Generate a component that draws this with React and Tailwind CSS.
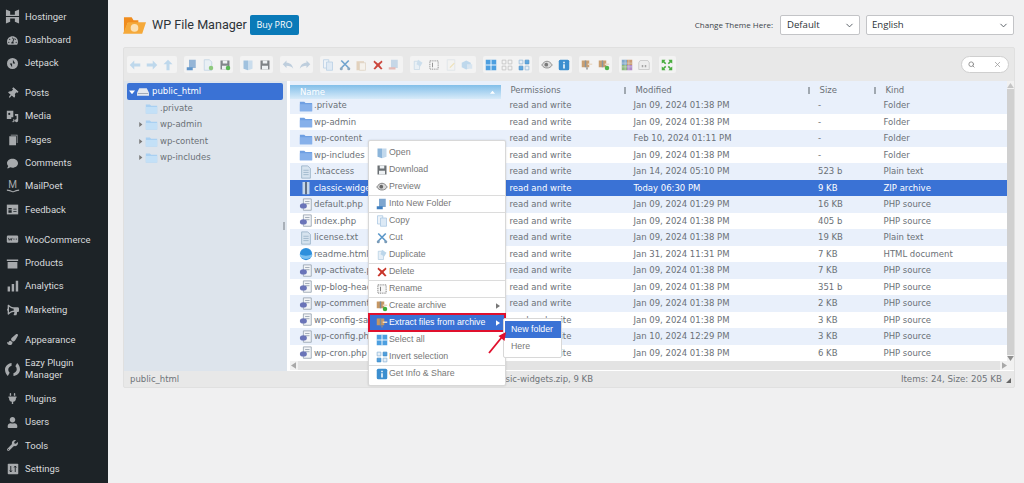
import { ChevronDown, Search, X } from "lucide-react";
import { FaThumbtack, FaComment, FaWrench, FaUser, FaPlug, FaBullhorn, FaTachometerAlt, FaPaintBrush } from "react-icons/fa";

const Svg = ({ children, size = 12, className = "" }) => (
  <svg viewBox="0 0 16 16" width={size} height={size} className={className}>
    {children}
  </svg>
);

// ---- sidebar icons
const side = {
  hostinger: (
    <svg viewBox="0 0 16 16" width="15" height="15" fill="#a7aaad">
      <path d="M1 .5l4.500 2V6h5V2.500L15 .5v7H1zM1 8.500h14v7l-4.500-2V10h-5v3.500L1 15.500z" />
    </svg>
  ),
  dash: <FaTachometerAlt size={11} color="#a7aaad" />,
  jetpack: (
    <svg viewBox="0 0 16 16" width="11" height="11">
      <circle cx="8" cy="8" r="8" fill="#a7aaad" />
      <path d="M8.600 2.500v5.600h3.400zM7.400 13.500V7.900H4z" fill="#1d2327" />
    </svg>
  ),
  posts: <FaThumbtack size={11} color="#a7aaad" style={{ transform: "rotate(40deg)" }} />,
  media: (
    <svg viewBox="0 0 16 16" width="13" height="13" fill="#a7aaad">
      <path d="M1 1h8v8H6.500v2H1zM4 3.500a1.300 1.300 0 100 2.600 1.300 1.300 0 000-2.600z" fillRule="evenodd" />
      <path d="M11 5h4v8a2 2 0 11-2-2V7h-2zM9 11a2 2 0 11-2 3h2z" />
    </svg>
  ),
  pages: (
    <svg viewBox="0 0 16 16" width="12" height="12" fill="#a7aaad">
      <path d="M5 1h9v11h-1V2H5zM3 3h9v12H3z" />
    </svg>
  ),
  comments: <FaComment size={11} color="#a7aaad" />,
  mailpoet: (
    <span className="flex flex-col items-center text-[10px] leading-[9px] text-[#a7aaad]">
      M
      <svg viewBox="0 0 16 4" width="14" height="4">
        <path d="M1 1c3 0 5 1 7 2 2-1 4-2 7-2" stroke="#a7aaad" fill="none" strokeWidth="1.200" />
      </svg>
    </span>
  ),
  feedback: (
    <svg viewBox="0 0 16 16" width="13" height="13">
      <path d="M1 2h14v12H1z" fill="#a7aaad" />
      <path d="M3 6h4v2H3zM3 9h4v3H3zM9 7h4v1H9zM9 10h4v1H9z" fill="#1d2327" />
    </svg>
  ),
  woo: (
    <svg viewBox="0 0 16 16" width="13" height="13">
      <rect x="1" y="3" width="14" height="9" rx="1.500" fill="#a7aaad" />
      <path d="M3 6l1 3 1.500-2 1 2 1-3M9 7.500h1.500M12 7.500h1.500" stroke="#1d2327" fill="none" strokeWidth="1" />
    </svg>
  ),
  products: (
    <svg viewBox="0 0 16 16" width="13" height="13" fill="#a7aaad">
      <path d="M1 3h14v2H1zM2 6h12v8H2z" />
    </svg>
  ),
  analytics: (
    <svg viewBox="0 0 16 16" width="13" height="13" fill="#a7aaad">
      <path d="M2 8h3v6H2zM7 5h3v9H7zM12 1h3v13h-3z" />
    </svg>
  ),
  marketing: <FaBullhorn size={12} color="#a7aaad" style={{ transform: "scaleX(-1)" }} />,
  appearance: <FaPaintBrush size={11} color="#a7aaad" />,
  eazy: (
    <svg viewBox="0 0 16 16" width="15" height="15" fill="#a7aaad">
      <path d="M7 1v3C4.500 5 3.500 6.500 3.500 8S4 10.500 5 11.500L3 15C1 13 0 10.500 0 8c0-3.500 3-6.500 7-7z" />
      <path d="M9 15v-3c2.500-1 3.500-2.500 3.500-4s-.5-3-1.500-3.500L13 1c2 2 3 4.500 3 7 0 3.500-3 6.500-7 7z" />
    </svg>
  ),
  plugins: <FaPlug size={11} color="#a7aaad" />,
  users: <FaUser size={11} color="#a7aaad" />,
  tools: <FaWrench size={11} color="#a7aaad" />,
  settings: (
    <svg viewBox="0 0 16 16" width="12" height="12">
      <rect x="1" y="1" width="14" height="14" rx="1" fill="#a7aaad" />
      <path d="M5 4v8M3.500 10L5 12l1.500-2M11 12V4M9.500 6L11 4l1.500 2" stroke="#1d2327" fill="none" strokeWidth="1.200" />
    </svg>
  ),
};

const menu = [
  { label: "Hostinger", icon: "hostinger" },
  { label: "Dashboard", icon: "dash" },
  { label: "Jetpack", icon: "jetpack" },
  { label: "Posts", icon: "posts", gap: true },
  { label: "Media", icon: "media" },
  { label: "Pages", icon: "pages" },
  { label: "Comments", icon: "comments" },
  { label: "MailPoet", icon: "mailpoet" },
  { label: "Feedback", icon: "feedback" },
  { label: "WooCommerce", icon: "woo", gap: true },
  { label: "Products", icon: "products" },
  { label: "Analytics", icon: "analytics" },
  { label: "Marketing", icon: "marketing" },
  { label: "Appearance", icon: "appearance", gap: true },
  { label: "Eazy Plugin Manager", icon: "eazy", tall: true },
  { label: "Plugins", icon: "plugins" },
  { label: "Users", icon: "users" },
  { label: "Tools", icon: "tools" },
  { label: "Settings", icon: "settings" },
];

// ---- file manager icons
const I = {
  back: <Svg><path d="M1 8l6-6v4h8v4H7v4z" fill="#a9cdea" /></Svg>,
  forward: <Svg><path d="M15 8L9 2v4H1v4h8v4z" fill="#a9cdea" /></Svg>,
  up: <Svg><path d="M8 1l6 6h-4v8H6V7H2z" fill="#a9cdea" /></Svg>,
  drive: <Svg><path d="M4 1h9v11H4z" fill="#7ea6cf" /><path d="M1 11h8v4H1z" fill="#3f7fc0" /></Svg>,
  newfile: <Svg><path d="M3 1h7l3 3v11H3z" fill="#e6eff7" stroke="#a9c4dc" /><circle cx="12" cy="12" r="3" fill="#63b84c" /></Svg>,
  savegreen: <Svg><path d="M2 2h12v12H2z" fill="#6d7378" /><path d="M5 2h6v4H5zM4 9h8v5H4z" fill="#eef1f3" /><circle cx="12" cy="12" r="3" fill="#3fae3a" /></Svg>,
  open: <Svg><path d="M2 2h6v13l-6-2z" fill="#8cb5da" /><path d="M8 2h6v11l-6 2z" fill="#c1d8ec" /></Svg>,
  floppy: <Svg><path d="M2 2h12v12H2z" fill="#6a6f73" /><path d="M5 2h6v4H5zM4 9h8v5H4z" fill="#eef1f3" /></Svg>,
  undo: <Svg><path d="M1 7l5-5v3c5 0 8 3 9 8-2-3-5-4-9-4v3z" fill="#a9bfd4" /></Svg>,
  redo: <Svg><path d="M15 7l-5-5v3C5 5 2 8 1 13c2-3 5-4 9-4v3z" fill="#a9bfd4" /></Svg>,
  copy: <Svg><path d="M2 1h7v11H2z" fill="#eef4fa" stroke="#a8c6e2" /><path d="M6 4h8v11H6z" fill="#dce9f5" stroke="#a8c6e2" /></Svg>,
  cut: <Svg><path d="M3 2l10 10M13 2L3 12" stroke="#5b97c8" strokeWidth="2.200" /><circle cx="3" cy="13" r="2" fill="#7a9bb8" /><circle cx="13" cy="13" r="2" fill="#7a9bb8" /></Svg>,
  paste: <Svg><path d="M2 3h10v12H2z" fill="#dcc4a6" /><path d="M6 5h8v10H6z" fill="#f7f2ea" stroke="#d6c7b1" /></Svg>,
  del: <Svg><path d="M3 2l5 4 5-4 1 2-4 4 4 5-2 1-4-4-4 4-2-1 4-5-4-4z" fill="#c8352a" /></Svg>,
  rm: <Svg><path d="M4 1h9v11H4z" fill="#b4cce2" /><path d="M1 11h9v3H1z" fill="#e0a39c" /></Svg>,
  dup: <Svg><path d="M3 3h7v11H3z" fill="#e6eff7" stroke="#b4cde2" /><path d="M8 1l6 4-3 5-5-3z" fill="#bcd6ea" /></Svg>,
  rename: <Svg><path d="M2.500 2.500h11v11h-11z" fill="#f7f7f7" stroke="#555" strokeDasharray="1.400 1" /><path d="M6 5v6" stroke="#555" /></Svg>,
  edit: <Svg><path d="M3 1h10v14H3z" fill="#f3f3f0" stroke="#cfd8e0" /><path d="M6 11l6-6 1 1-6 6z" fill="#ecd58e" /></Svg>,
  resize: <Svg><path d="M1 5l6-3 6 3v6l-6 3-6-3z" fill="#a9cdea" /><path d="M8 7h7v6H8z" fill="#cde0f0" /></Svg>,
  selAll: <Svg><path d="M1 1h14v14H1z" fill="#4d9fe0" /><path d="M8 1v14M1 8h14" stroke="#fff" strokeWidth="1.200" /></Svg>,
  selNone: <Svg><path d="M1.500 1.500h5v5h-5zM9.500 1.500h5v5h-5zM1.500 9.500h5v5h-5zM9.500 9.500h5v5h-5z" fill="#f5f5f5" stroke="#b9b9b9" /></Svg>,
  selInv: <Svg><path d="M1.500 9.500h5v5h-5zM9.500 1.500h5v5h-5z" fill="#4d9fe0" stroke="#3f89c4" /><path d="M1.500 1.500h5v5h-5zM9.500 9.500h5v5h-5z" fill="#e8f0f7" stroke="#8db6d8" /></Svg>,
  eye: <Svg><path d="M1 8c2-3 4-5 7-5s5 2 7 5c-2 3-4 4-7 4S3 11 1 8z" fill="#d8d8d8" stroke="#666" /><circle cx="7" cy="7.500" r="2.500" fill="#666" /></Svg>,
  info: <Svg><rect x="1" y="1" width="14" height="14" rx="2" fill="#3b8ecf" /><path d="M7 3.500h2v2H7zM7 7h2v5.500H7z" fill="#fff" /></Svg>,
  arch: <Svg><path d="M1 2h10v9H1z" fill="#c69763" /><path d="M5 2h2v9H5z" fill="#7c8b96" /><path d="M9 6h6v2H9z" fill="#e8d9c6" /><path d="M7 11h2v3H7z" fill="#888" /></Svg>,
  archG: <Svg><path d="M1 2h10v9H1z" fill="#c69763" /><path d="M5 2h2v9H5z" fill="#7c8b96" /><path d="M9 6h6v2H9z" fill="#e8d9c6" /><circle cx="12" cy="12" r="3" fill="#3fae3a" /></Svg>,
  places: <Svg><path d="M1 1h7v7H1z" fill="#6d9bc4" /><path d="M8 1h7v7H8z" fill="#c48c5c" /><path d="M1 8h7v7H1z" fill="#7bae6a" /><path d="M8 8h7v7H8z" fill="#a57ac0" /><path d="M1 5.500h14M1 10.500h14M5.500 1v14M10.500 1v14" stroke="#dfe8ee" strokeWidth=".6" /></Svg>,
  about: <Svg><path d="M3 2h10l2 3v9H1V5z" fill="#ececec" stroke="#bbb" /><path d="M5 8h2v3H5zM9 8h2v3H9z" fill="#999" /></Svg>,
  full: <Svg><path d="M1 1h5L4.500 3 7 5.500 5.500 7 3 4.500 1 6zM15 1v5l-2-1.500L10.500 7 9 5.500 11.500 3 10 1zM1 15v-5l2 1.500L5.500 9 7 10.500 4.500 13 6 15zM15 15h-5l1.500-2L9 10.500 10.500 9l2.500 2.500 2-1.500z" fill="#49ad3f" /></Svg>,
  folder: <Svg size={14}><path d="M1 3h5l1.500 1.500H15V14H1z" fill="#6f9fe2" /><path d="M1 6h14v8H1z" fill="#86b0ea" /></Svg>,
  treeFolder: <Svg size={13}><path d="M1 3h5l1.500 1.500H15V14H1z" fill="#a9d0f2" /><path d="M1 6h14v8H1z" fill="#c3e0f7" /></Svg>,
  text: <Svg size={14}><path d="M3 1h7l3 3v11H3z" fill="#d6e3ef" stroke="#9db5c9" /><path d="M5 6h6M5 8.500h6M5 11h6" stroke="#9db5c9" /></Svg>,
  php: <Svg size={14}><path d="M5 1h9v13H5z" fill="#f2f4f6" stroke="#9aa6b2" /><path d="M7 4h5M7 6.500h5" stroke="#9aa6b2" /><ellipse cx="5" cy="9" rx="4" ry="3" fill="#6a74b8" /></Svg>,
  zip: <Svg size={14}><path d="M4 1h8v14H4z" fill="#c3d6ea" /><path d="M7 1h2v14H7z" fill="#4f6176" /></Svg>,
  html: <Svg size={14}><circle cx="8" cy="8" r="7" fill="#2d8fdc" /><path d="M1 8c3 2.500 11 2.500 14 0v2c-2 5-12 5-14 0z" fill="#7bc0f0" /></Svg>,
};

const toolbar = [
  [["back", 0.7], ["forward", 0.7], ["up", 0.7]],
  [["drive", 0.8], ["newfile", 0.7], ["savegreen", 0.85]],
  [["open", 0.8], ["floppy", 0.85]],
  [["undo", 0.7], ["redo", 0.7]],
  [["copy", 0.8], ["cut", 0.85], ["paste", 0.7], ["del", 0.9], ["rm", 0.7]],
  [["dup", 0.7], ["rename", 0.8], ["edit", 0.6], ["resize", 0.7]],
  [["selAll", 1], ["selNone", 0.9], ["selInv", 0.9]],
  [["eye", 0.85], ["info", 1]],
  [["arch", 0.9], ["archG", 0.9]],
  [["places", 0.85], ["about", 0.85]],
  [["full", 1]],
];

const files = [
  ["folder", ".private", "Jan 09, 2024 01:38 PM", "-", "Folder"],
  ["folder", "wp-admin", "Jan 09, 2024 01:38 PM", "-", "Folder"],
  ["folder", "wp-content", "Feb 10, 2024 01:11 PM", "-", "Folder"],
  ["folder", "wp-includes", "Jan 09, 2024 01:38 PM", "-", "Folder"],
  ["text", ".htaccess", "Jan 14, 2024 05:10 PM", "523 b", "Plain text"],
  ["zip", "classic-widgets.zip", "Today 06:30 PM", "9 KB", "ZIP archive"],
  ["php", "default.php", "Jan 09, 2024 01:29 PM", "16 KB", "PHP source"],
  ["php", "index.php", "Jan 09, 2024 01:38 PM", "405 b", "PHP source"],
  ["text", "license.txt", "Jan 09, 2024 01:38 PM", "19 KB", "Plain text"],
  ["html", "readme.html", "Jan 31, 2024 11:31 PM", "7 KB", "HTML document"],
  ["php", "wp-activate.php", "Jan 09, 2024 01:38 PM", "7 KB", "PHP source"],
  ["php", "wp-blog-header.php", "Jan 09, 2024 01:38 PM", "351 b", "PHP source"],
  ["php", "wp-comments-post.php", "Jan 09, 2024 01:38 PM", "2 KB", "PHP source"],
  ["php", "wp-config-sample.php", "Jan 09, 2024 01:38 PM", "3 KB", "PHP source"],
  ["php", "wp-config.php", "Jan 10, 2024 12:29 PM", "3 KB", "PHP source"],
  ["php", "wp-cron.php", "Jan 09, 2024 01:38 PM", "6 KB", "PHP source"],
];

const contextItems = [
  { label: "Open", icon: "open" },
  { label: "Download", icon: "floppy" },
  { label: "Preview", icon: "eye" },
  { label: "Into New Folder", icon: "drive", sep: true },
  { label: "Copy", icon: "copy", sep: true },
  { label: "Cut", icon: "cut" },
  { label: "Duplicate", icon: "dup" },
  { label: "Delete", icon: "del", sep: true },
  { label: "Rename", icon: "rename", sep: true },
  { label: "Create archive", icon: "archG", sep: true, arrow: true },
  { label: "Extract files from archive", icon: "arch", active: true, arrow: true },
  { label: "Select all", icon: "selAll" },
  { label: "Invert selection", icon: "selInv" },
  { label: "Get Info & Share", icon: "info", sep: true },
];

function Sidebar() {
  return (
    <aside className="w-[108px] shrink-0 bg-[#1d2327] pt-[5px] font-['Roboto',sans-serif] text-[9.500px] text-[#d8dadc]">
      {menu.map((m) => (
        <div
          key={m.label}
          className={`flex items-center ${m.tall ? "h-[36px] leading-[12.500px]" : "h-[23.350px]"} ${m.gap ? "mt-[6.500px]" : ""}`}
        >
          <span className="flex w-[25px] shrink-0 justify-center">{side[m.icon]}</span>
          <span>{m.label}</span>
        </div>
      ))}
    </aside>
  );
}

function Header() {
  return (
    <div className="flex h-[20px] items-center">
      <svg viewBox="0 0 24 19" width="23" height="19" className="mr-[6px]">
        <path d="M1 1h8l2 3h5v3H5L1 18z" fill="#f08c1d" />
        <path d="M5 6h19l-4 12H0z" fill="#f5a93a" />
        <circle cx="12" cy="12" r="4" fill="#fbe0b4" />
      </svg>
      <span className="w-[89px] whitespace-nowrap font-['Roboto',sans-serif] text-[12.600px] font-normal text-[#2c3338]">WP File Manager</span>
      <button className="ml-[9px] h-[20px] w-[49px] rounded-[2px] bg-[#0a7ab8] text-[9px] text-white">Buy PRO</button>
      <span className="ml-auto mr-[7px] text-[8px] text-[#3c434a]">Change Theme Here:</span>
      <div className="mr-[6px] flex h-[20px] w-[80px] items-center justify-between rounded-[2px] border border-[#c3c4c7] bg-white pl-[6px] pr-[4px] text-[9.600px] text-[#2c3338]">
        Default <ChevronDown size={11} strokeWidth={2} color="#50575e" />
      </div>
      <div className="mr-[1px] flex h-[20px] w-[148px] items-center justify-between rounded-[2px] border border-[#c3c4c7] bg-white pl-[5px] pr-[4px] text-[9.600px] text-[#2c3338]">
        English <ChevronDown size={11} strokeWidth={2} color="#50575e" />
      </div>
    </div>
  );
}

function Toolbar() {
  return (
    <div className="flex h-[33px] items-center gap-[7px] pl-[3px] pr-[5px]">
      {toolbar.map((group, i) => (
        <div key={i} className="flex h-[16.500px] rounded-[2px] bg-[#f3f3f3]">
          {group.map(([name, op], j) => (
            <span key={j} className="flex w-[16.500px] items-center justify-center" style={{ opacity: op }}>
              {I[name]}
            </span>
          ))}
        </div>
      ))}
      <div className="ml-auto flex h-[17px] w-[48px] items-center justify-between rounded-full border border-[#cfcfcf] bg-white px-[6px]">
        <Search size={7} color="#888" strokeWidth={3} />
        <X size={9} color="#999" />
      </div>
    </div>
  );
}

function Tree() {
  const rows = [
    [".private", false],
    ["wp-admin", true],
    ["wp-content", true],
    ["wp-includes", true],
  ];
  return (
    <div className="relative w-[163px] shrink-0 bg-[#dde4ec] pl-[3px] pt-[2px]">
      <div className="flex h-[17px] w-[156px] items-center rounded-[2px] bg-[#3a72d5] text-white">
        <svg viewBox="0 0 8 8" width="6" height="6" className="ml-[2px]"><path d="M0 2h8L4 7z" fill="#fff" /></svg>
        <svg viewBox="0 0 16 12" width="12" height="10" className="ml-[2px]">
          <path d="M3 1h10l3 6v4H0V7z" fill="#e4e8ee" />
          <path d="M1 8h14" stroke="#8a94a6" />
        </svg>
        <span className="ml-[3px]">public_html</span>
      </div>
      <div>
        {rows.map(([name, arrow]) => (
          <div key={name} className="flex h-[16.500px] items-center pl-[11px] text-[#6b7177]">
            <span className="flex w-[7px]">
              {arrow && <svg viewBox="0 0 8 8" width="5" height="5"><path d="M2 0l5 4-5 4z" fill="#777" /></svg>}
            </span>
            {I.treeFolder}
            <span className="ml-[2px]">{name}</span>
          </div>
        ))}
      </div>
      <div className="absolute left-[159px] top-[141px] h-[8px] w-[2px] bg-[#a9b0b8]" />
    </div>
  );
}

function FileList() {
  return (
    <div className="relative min-w-0 flex-1 bg-white pl-[3px]">
      <div className="flex h-[16px] items-center bg-[#e9f0fb] pt-[2px] text-[#6b7177]">
        <span className="relative -mb-[2px] flex h-[14px] w-[211px] items-center self-end bg-gradient-to-b from-[#82bfe9] to-[#d8ebf9] pl-[10px] text-white">
          Name
          <svg viewBox="0 0 8 8" width="5" height="5" className="absolute right-[6px] top-[5px]"><path d="M0 6h8L4 1z" fill="#fff" /></svg>
        </span>
        <span className="ml-[9.500px] w-[113px]">Permissions</span>
        <span className="h-[7px] w-[2px] bg-[#a0a8b0]" />
        <span className="ml-[10px] w-[172px]">Modified</span>
        <span className="h-[7px] w-[2px] bg-[#a0a8b0]" />
        <span className="ml-[10px] w-[54px]">Size</span>
        <span className="h-[7px] w-[2px] bg-[#a0a8b0]" />
        <span className="ml-[10px]">Kind</span>
      </div>
      <div className="mr-[7px]">
        {files.map(([icon, name, date, size, kind], i) => {
          const selected = i === 5;
          const bg = selected ? "bg-[#3a72d5] text-white" : i % 2 === 0 ? "bg-[#e9f0fb] text-[#6b7177]" : "bg-white text-[#6b7177]";
          return (
            <div key={name} className={`flex h-[16.500px] items-center whitespace-nowrap pt-[1px] ${bg}`}>
              <span className="flex w-[219.500px] items-center pl-[9px]">
                {I[icon]}
                <span className="ml-[1px]">{name}</span>
              </span>
              <span className="w-[124px]">read and write</span>
              <span className="w-[184.500px]">{date}</span>
              <span className="w-[65.500px]">{size}</span>
              <span>{kind}</span>
            </div>
          );
        })}
      </div>
      {/* scrollbars */}
      <div className="absolute right-0 top-0 flex h-[281px] w-[7px] flex-col items-center bg-[#f1f1f1]">
        <svg viewBox="0 0 8 6" width="7" height="5" className="mt-[2px]"><path d="M0 6h8L4 0z" fill="#c4c4c4" /></svg>
        <div className="mt-[1px] w-full flex-1 bg-[#d0d0d0]" />
        <svg viewBox="0 0 8 6" width="7" height="5" className="my-[1px]"><path d="M0 0h8L4 6z" fill="#8f8f8f" /></svg>
      </div>
      <div className="flex h-[9px] items-center bg-[#f1f1f1] pr-[4px]">
        <svg viewBox="0 0 6 8" width="5" height="7" className="ml-[1px]"><path d="M6 0v8L0 4z" fill="#a8a8a8" /></svg>
        <div className="mx-[2px] h-full flex-1 bg-[#e3e3e3]" />
        <svg viewBox="0 0 6 8" width="5" height="7" className="mr-[3px]"><path d="M0 0v8l6-4z" fill="#a8a8a8" /></svg>
      </div>
    </div>
  );
}

function ContextMenu() {
  return (
    <>
      <div className="absolute left-[368px] top-[140px] w-[138px] rounded-[2px] border border-[#d8d8d8] bg-white py-[3px] font-['Liberation_Sans',sans-serif] text-[8.800px] text-[#777] shadow-[0_0_2px_rgba(0,0,0,0.15)]">
        {contextItems.map((c) => (
          <div
            key={c.label}
            className={`flex h-[17px] items-center pl-[5px] ${c.sep ? "border-t border-[#dcdcdc]" : ""} ${c.active ? "bg-[#3a72d5] text-white outline-2 -outline-offset-1 outline-[#e0102d]" : ""}`}
          >
            <span className="flex w-[15px] justify-center">{I[c.icon]}</span>
            <span>{c.label}</span>
            {c.arrow && (
              <svg viewBox="0 0 6 8" width="4" height="6" className="ml-auto mr-[5px]">
                <path d="M0 0l6 4-6 4z" fill={c.active ? "#fff" : "#777"} />
              </svg>
            )}
          </div>
        ))}
      </div>
      <div className="absolute left-[503px] top-[318px] w-[59px] rounded-[2px] border border-[#d8d8d8] bg-white py-[2px] pl-[1px] font-['Liberation_Sans',sans-serif] text-[8.800px] text-[#777]">
        <div className="flex h-[17px] items-center bg-[#3a72d5] pl-[6px] text-white">New folder</div>
        <div className="flex h-[17px] items-center pl-[6px]">Here</div>
      </div>
      <svg viewBox="0 0 20 24" width="20" height="24" className="absolute left-[487px] top-[331px]">
        <path d="M2 22L15 6" stroke="#e0102d" strokeWidth="1.800" />
        <path d="M19 1l-1.500 9-6-5z" fill="#e0102d" />
      </svg>
    </>
  );
}

export default function App() {
  return (
    <div className="relative flex h-[483px] w-[1024px] overflow-hidden bg-[#f0f0f1] font-['Open_Sans',sans-serif]">
      <Sidebar />
      <main className="w-[907px] pl-[15px] pt-[15px]">
        <Header />
        <section className="mt-[12px] w-[892px] overflow-hidden rounded-[2px] border border-[#e0e0e0] bg-[#e8e8e8] font-['DejaVu_Sans',sans-serif] text-[8.500px]">
          <Toolbar />
          <div className="flex h-[290px]">
            <Tree />
            <FileList />
          </div>
          <div className="relative flex h-[16px] items-center pt-[1px] text-[#6f7479]">
            <span className="w-[469px] pl-[6px]">
              <span className="float-left">public_html</span>
              <span className="float-right">classic-widgets.zip, 9 KB</span>
            </span>
            <span className="ml-auto mr-[12px] text-[8.700px]">Items: 24, Size: 205 KB</span>
            <svg viewBox="0 0 6 6" width="5" height="5" className="absolute bottom-[4px] right-[3px]"><path d="M6 0v6H0z" fill="#666" /></svg>
          </div>
        </section>
      </main>
      <ContextMenu />
    </div>
  );
}
